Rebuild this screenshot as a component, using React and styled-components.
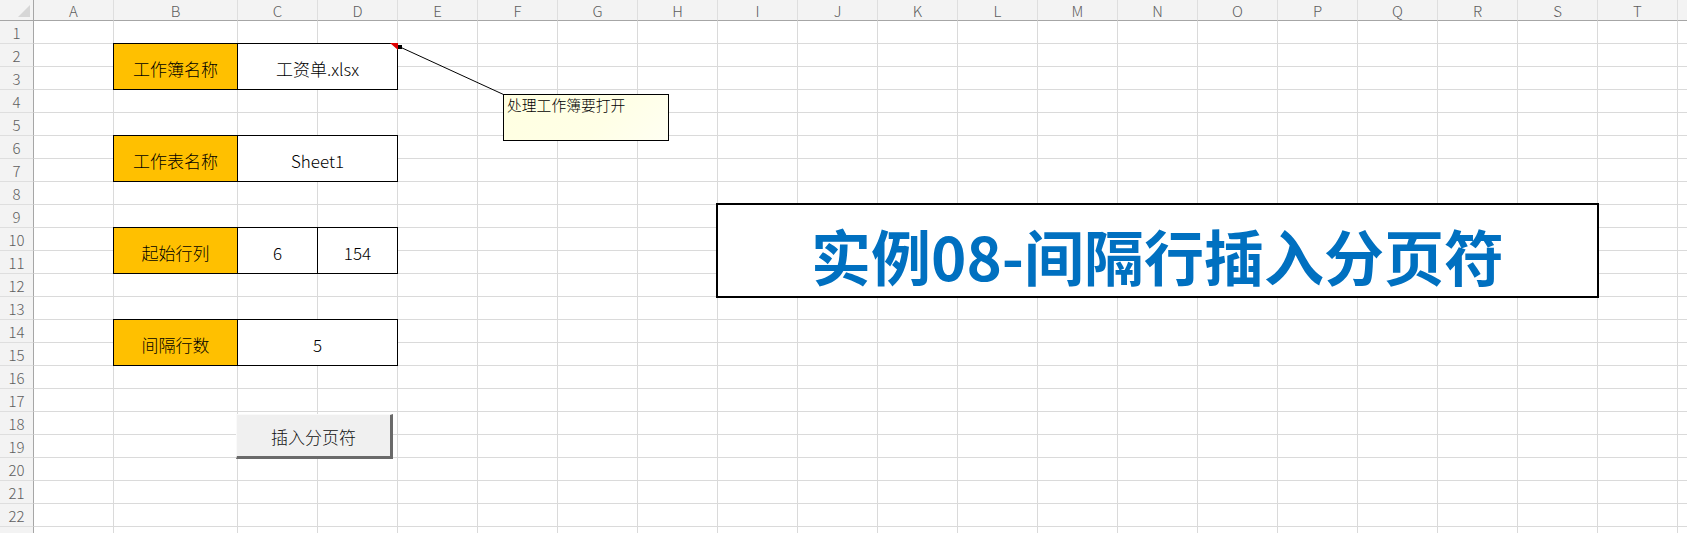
import React from 'react';
import styled, { createGlobalStyle, css } from 'styled-components';

const Global = createGlobalStyle`
  html, body { margin: 0; padding: 0; background: #fff; overflow: hidden; }
  * { box-sizing: border-box; }
`;

const COLS = ['A','B','C','D','E','F','G','H','I','J','K','L','M','N','O','P','Q','R','S','T','U'];
const ROW_COUNT = 23;
const VISIBLE_ROWS = 22;

const Sheet = styled.div`
  position: relative;
  display: grid;
  grid-template-columns: 34px 80px 124px repeat(19, 80px);
  grid-template-rows: 21px repeat(${ROW_COUNT}, 23px);
  width: 1687px;
  height: 533px;
  overflow: hidden;
  font-family: "Noto Sans CJK SC", "Noto Sans", sans-serif;
`;

const Corner = styled.div`
  position: relative;
  background: #f3f3f3;
  border-right: 1px solid #a6a6a6;
  border-bottom: 1px solid #a6a6a6;
  &::after {
    content: '';
    position: absolute;
    right: 3px;
    bottom: 3px;
    width: 0;
    height: 0;
    border-left: 12px solid transparent;
    border-bottom: 12px solid #d6d6d6;
  }
`;

const ColHead = styled.div`
  background: #f3f3f3;
  border-right: 1px solid #dedede;
  border-bottom: 1px solid #a6a6a6;
  display: flex;
  align-items: center;
  justify-content: center;
  font-size: 15px;
  font-weight: 300;
  color: #5e5e5e;
  line-height: 1;
  padding-top: 1px;
`;

const RowHead = styled.div`
  background: #f3f3f3;
  border-right: 1px solid #a6a6a6;
  border-bottom: 1px solid #dedede;
  display: flex;
  align-items: center;
  justify-content: center;
  font-size: 15px;
  font-weight: 300;
  color: #5e5e5e;
  line-height: 1;
`;

const Cell = styled.div`
  border-right: 1px solid #dadada;
  border-bottom: 1px solid #dadada;
`;

const Merged = styled.div`
  grid-column: ${p => p.$col};
  grid-row: ${p => p.$row};
  position: relative;
  z-index: 1;
  margin: -1px 0 0 -1px;
  border: 1px solid #000;
  background: ${p => (p.$label ? '#ffc000' : '#ffffff')};
  display: flex;
  align-items: center;
  justify-content: center;
  padding-top: 3px;
  font-size: 17px;
  font-weight: 300;
  color: #000;
  line-height: 1;
  ${p => p.$note && css`
    &::after {
      content: '';
      position: absolute;
      top: -1px;
      right: -1px;
      width: 0;
      height: 0;
      border-top: 7px solid #e00000;
      border-left: 8px solid transparent;
    }
  `}
`;

const TitleBox = styled.div`
  grid-column: 10 / 21;
  grid-row: 10 / 14;
  z-index: 1;
  margin: -2px -1px -1px -2px;
  border: 2px solid #000;
  background: #fff;
  display: flex;
  align-items: center;
  justify-content: center;
  padding-top: 8px;
  font-size: 60px;
  font-weight: 700;
  color: #0070c0;
  line-height: 1;
  white-space: nowrap;
`;

const Button = styled.div`
  position: absolute;
  left: 236px;
  top: 414px;
  width: 157px;
  height: 45px;
  z-index: 2;
  background: #f0f0f0;
  border-top: 1px solid #fafafa;
  border-left: 1px solid #fafafa;
  border-right: 3px solid #6a6a6a;
  border-bottom: 3px solid #6a6a6a;
  display: flex;
  align-items: center;
  justify-content: center;
  padding-top: 2px;
  font-size: 17px;
  font-weight: 300;
  color: #111;
  line-height: 1;
`;

const Note = styled.div`
  position: absolute;
  left: 503px;
  top: 94px;
  width: 166px;
  height: 47px;
  z-index: 3;
  border: 1px solid #000;
  background: linear-gradient(135deg, #ffffe1 0%, #ffffe6 60%, #fffff2 100%);
  padding: 3px 3px;
  font-size: 14.8px;
  font-weight: 300;
  line-height: 1;
  color: #000;
  font-family: "Noto Sans CJK SC", sans-serif;
`;

const Connector = styled.svg`
  position: absolute;
  left: 0;
  top: 0;
  z-index: 3;
  pointer-events: none;
`;

const merges = [
  { col: '3 / 4', row: '3 / 5', label: true, text: '工作簿名称', cells: [[2,'B'],[3,'B']] },
  { col: '4 / 6', row: '3 / 5', text: '工资单.xlsx', note: true, cells: [[2,'C'],[2,'D'],[3,'C'],[3,'D']] },
  { col: '3 / 4', row: '7 / 9', label: true, text: '工作表名称', cells: [[6,'B'],[7,'B']] },
  { col: '4 / 6', row: '7 / 9', text: 'Sheet1', cells: [[6,'C'],[6,'D'],[7,'C'],[7,'D']] },
  { col: '3 / 4', row: '11 / 13', label: true, text: '起始行列', cells: [[10,'B'],[11,'B']] },
  { col: '4 / 5', row: '11 / 13', text: '6', cells: [[10,'C'],[11,'C']] },
  { col: '5 / 6', row: '11 / 13', text: '154', cells: [[10,'D'],[11,'D']] },
  { col: '3 / 4', row: '15 / 17', label: true, text: '间隔行数', cells: [[14,'B'],[15,'B']] },
  { col: '4 / 6', row: '15 / 17', text: '5', cells: [[14,'C'],[14,'D'],[15,'C'],[15,'D']] },
];

const covered = new Set();
merges.forEach(m => m.cells.forEach(([r, c]) => covered.add(`${c}${r}`)));
const titleCols = COLS.slice(COLS.indexOf('I'), COLS.indexOf('S') + 1);
for (let r = 9; r <= 12; r++) titleCols.forEach(c => covered.add(`${c}${r}`));

export default function App() {
  const rows = [];
  for (let r = 1; r <= ROW_COUNT; r++) {
    rows.push(<RowHead key={`rh${r}`}>{r <= VISIBLE_ROWS ? r : ''}</RowHead>);
    COLS.forEach(c => {
      if (!covered.has(`${c}${r}`)) rows.push(<Cell key={`${c}${r}`} />);
    });
  }

  return (
    <>
      <Global />
      <Sheet>
        <Corner />
        {COLS.map(c => <ColHead key={c}>{c === 'U' ? '' : c}</ColHead>)}
        {rows}
        {merges.map(m => (
          <Merged key={m.col + m.row} $col={m.col} $row={m.row} $label={m.label} $note={m.note}>
            {m.text}
          </Merged>
        ))}
        <TitleBox>实例08-间隔行插入分页符</TitleBox>
        <Button>插入分页符</Button>
        <Connector width="1687" height="533" viewBox="0 0 1687 533">
          <line x1="400" y1="47" x2="503.5" y2="94.5" stroke="#000" strokeWidth="1" />
          <rect x="398" y="45" width="4" height="4" fill="#000" />
        </Connector>
        <Note>处理工作簿要打开</Note>
      </Sheet>
    </>
  );
}
